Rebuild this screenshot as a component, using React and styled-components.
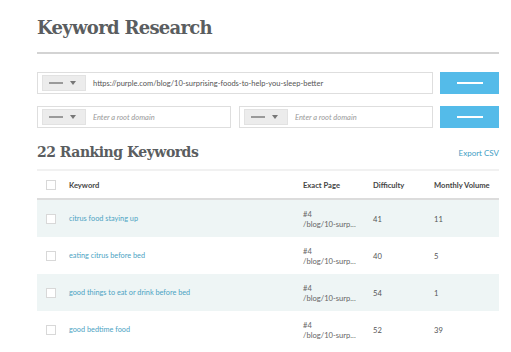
import React from "react"
import styled, { createGlobalStyle } from "styled-components"

const GlobalStyle = createGlobalStyle`
  body {
    margin: 0;
    background: #fff;
    font-family: Lato, "Liberation Sans", sans-serif;
  }
`

const Page = styled.div`
  width: 462px;
  padding: 15px 0 0 37px;
`

const Title = styled.h1`
  margin: 0;
  font-family: "DejaVu Serif", serif;
  font-weight: bold;
  font-size: 18px;
  letter-spacing: -0.7px;
  color: #5a5d60;
  line-height: 26px;
  padding-bottom: 11px;
  border-bottom: 2px solid #d3d3d3;
`

const Form = styled.div`
  display: flex;
  flex-direction: column;
  gap: 12px;
  margin-top: 18px;
`

const FormRow = styled.div`
  display: flex;
  gap: 7px;
`

const Fields = styled.div`
  flex: 1;
  display: flex;
  gap: 8px;
`

const Field = styled.div`
  flex: 1;
  height: 22px;
  border: 1px solid #dedede;
  display: flex;
  align-items: center;
  padding: 0 4px;
  box-sizing: border-box;
`

const Select = styled.div`
  width: 44px;
  height: 16px;
  background: #ececec;
  border: 1px solid #e2e2e2;
  display: flex;
  align-items: center;
  padding: 0 6px;
  box-sizing: border-box;
  gap: 7px;
  flex-shrink: 0;
`

const Dash = styled.span`
  width: ${p => p.$w}px;
  height: 2px;
  background: ${p => p.$c};
  display: block;
`

const Caret = styled.span`
  width: 0;
  height: 0;
  border-left: 3px solid transparent;
  border-right: 3px solid transparent;
  border-top: 4px solid #777;
`

const InputText = styled.span`
  margin-left: 7px;
  font-size: 7.5px;
  color: ${p => (p.$placeholder ? "#999" : "#555")};
  font-style: ${p => (p.$placeholder ? "italic" : "normal")};
  white-space: nowrap;
`

const Button = styled.div`
  width: 59px;
  height: 22px;
  background: #54bbe9;
  display: flex;
  align-items: center;
  justify-content: center;
  flex-shrink: 0;
`

const SectionHead = styled.div`
  display: flex;
  justify-content: space-between;
  align-items: flex-end;
  margin-top: 15px;
`

const Subtitle = styled.h2`
  margin: 0;
  font-family: "DejaVu Serif", serif;
  font-weight: bold;
  font-size: 14px;
  letter-spacing: -0.5px;
  color: #5a5d60;
  line-height: 18px;
`

const Export = styled.a`
  font-size: 8px;
  color: #3f9ec4;
  margin-bottom: 3px;
`

const Table = styled.div`
  margin-top: 8px;
  border-top: 2px solid #f1f1f1;
`

const Row = styled.div`
  display: grid;
  grid-template-columns: 32px 234px 70px 61px 1fr;
  align-items: center;
  height: ${p => (p.$head ? 27 : 37)}px;
  background: ${p => (p.$shade ? "#eef5f5" : "#fff")};
  border-bottom: ${p => (p.$head ? "2px solid #dcdcdc" : "none")};
  font-size: 7.6px;
  color: #555;
`

const Th = styled.div`
  font-weight: bold;
  color: #444;
`

const Box = styled.div`
  width: 8px;
  height: 8px;
  border: 1px solid #d8d8d8;
  background: #fff;
  margin-left: 9px;
`

const Keyword = styled.div`
  color: #4ba3c3;
  font-size: 7.3px;
`

const Page2 = styled.div`
  line-height: 10px;
  color: #666;
`

const rows = [
  { kw: "citrus food staying up", diff: 41, vol: 11 },
  { kw: "eating citrus before bed", diff: 40, vol: 5 },
  { kw: "good things to eat or drink before bed", diff: 54, vol: 1 },
  { kw: "good bedtime food", diff: 52, vol: 39 },
]

const Input = ({ text, placeholder }) => (
  <Field>
    <Select>
      <Dash $w={14} $c="#9a9a9a" />
      <Caret />
    </Select>
    <InputText $placeholder={placeholder}>{text}</InputText>
  </Field>
)

const App = () => (
  <>
    <GlobalStyle />
    <Page>
      <Title>Keyword Research</Title>
      <Form>
        <FormRow>
          <Fields>
            <Input text="https://purple.com/blog/10-surprising-foods-to-help-you-sleep-better" />
          </Fields>
          <Button>
            <Dash $w={26} $c="#fff" />
          </Button>
        </FormRow>
        <FormRow>
          <Fields>
            <Input text="Enter a root domain" placeholder />
            <Input text="Enter a root domain" placeholder />
          </Fields>
          <Button>
            <Dash $w={26} $c="#fff" />
          </Button>
        </FormRow>
      </Form>
      <SectionHead>
        <Subtitle>22 Ranking Keywords</Subtitle>
        <Export>Export CSV</Export>
      </SectionHead>
      <Table>
        <Row $head>
          <Box />
          <Th>Keyword</Th>
          <Th>Exact Page</Th>
          <Th>Difficulty</Th>
          <Th>Monthly Volume</Th>
        </Row>
        {rows.map((r, i) => (
          <Row key={r.kw} $shade={i % 2 === 0}>
            <Box />
            <Keyword>{r.kw}</Keyword>
            <Page2>
              #4
              <br />
              /blog/10-surp...
            </Page2>
            <div>{r.diff}</div>
            <div>{r.vol}</div>
          </Row>
        ))}
      </Table>
    </Page>
  </>
)

export default App
